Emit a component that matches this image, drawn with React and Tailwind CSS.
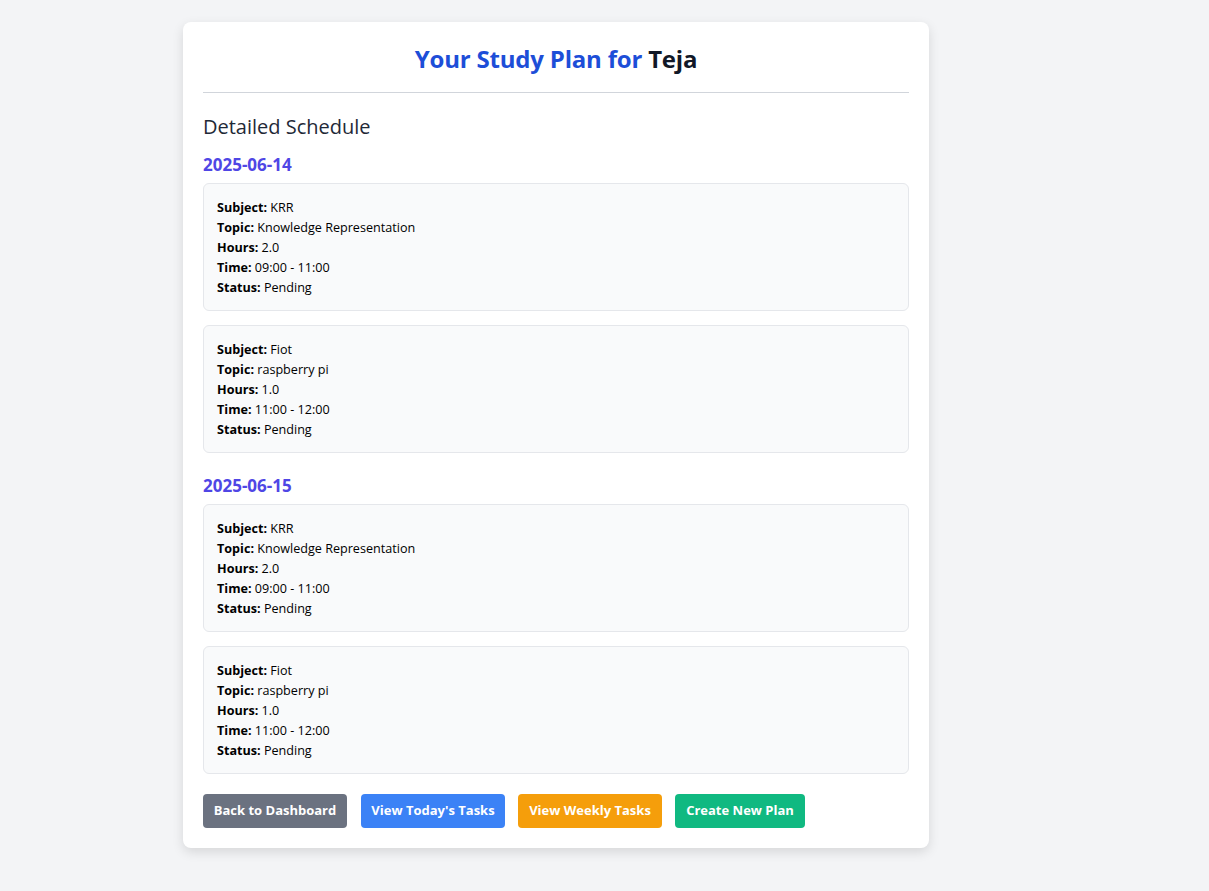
import React from "react";

const days = [
  {
    date: "2025-06-14",
    items: [
      { subject: "KRR", topic: "Knowledge Representation", hours: "2.0", time: "09:00 - 11:00", status: "Pending" },
      { subject: "Fiot", topic: "raspberry pi", hours: "1.0", time: "11:00 - 12:00", status: "Pending" },
    ],
  },
  {
    date: "2025-06-15",
    items: [
      { subject: "KRR", topic: "Knowledge Representation", hours: "2.0", time: "09:00 - 11:00", status: "Pending" },
      { subject: "Fiot", topic: "raspberry pi", hours: "1.0", time: "11:00 - 12:00", status: "Pending" },
    ],
  },
];

function Row({ label, value }) {
  return (
    <div className="h-5 leading-5">
      <span className="font-bold">{label}:</span> {value}
    </div>
  );
}

export default function App() {
  return (
    <div
      className="min-h-[891px] bg-[#f3f4f6] pt-[22px] pl-[183px]"
      style={{ fontFamily: '"Open Sans", "Noto Sans", sans-serif' }}
    >
      <div className="w-[746px] bg-white rounded-lg shadow-[0_4px_12px_rgba(0,0,0,0.12)] px-5 pt-[22px] pb-5">
        <h1 className="text-center text-[24px] font-bold leading-[30px] text-[#1d4ed8] tracking-[-0.2px]">
          Your Study Plan for <span className="text-[#111827]">Teja</span>
        </h1>
        <div className="mt-[18px] border-t border-[#d1d5db]" />
        <h2 className="mt-[21px] text-[20px] leading-[26px] text-[#1f2937]">Detailed Schedule</h2>
        {days.map((d, i) => (
          <div key={d.date} className={i === 0 ? "mt-[14px]" : "mt-[22px]"}>
            <h3 className="text-[17px] font-bold leading-[22px] text-[#4f46e5]">{d.date}</h3>
            <div className="mt-[7px] flex flex-col gap-[14px]">
              {d.items.map((it, j) => (
                <div
                  key={j}
                  className="h-[128px] bg-[#f9fafb] border border-[#e5e7eb] rounded-md px-[13px] pt-[14px] text-[12.6px] text-black"
                >
                  <Row label="Subject" value={it.subject} />
                  <Row label="Topic" value={it.topic} />
                  <Row label="Hours" value={it.hours} />
                  <Row label="Time" value={it.time} />
                  <Row label="Status" value={it.status} />
                </div>
              ))}
            </div>
          </div>
        ))}
        <div className="mt-[20px] flex gap-[13px]">
          {[
            ["Back to Dashboard", "bg-[#6b7280]", "w-[144px]"],
            ["View Today's Tasks", "bg-[#3b82f6]", "w-[144px] ml-px"],
            ["View Weekly Tasks", "bg-[#f59e0b]", "w-[144px]"],
            ["Create New Plan", "bg-[#10b981]", "w-[130px]"],
          ].map(([t, bg, w]) => (
            <button
              key={t}
              className={`${bg} ${w} h-[34px] rounded text-white text-[13px] font-bold flex items-center justify-center`}
            >
              {t}
            </button>
          ))}
        </div>
      </div>
    </div>
  );
}
